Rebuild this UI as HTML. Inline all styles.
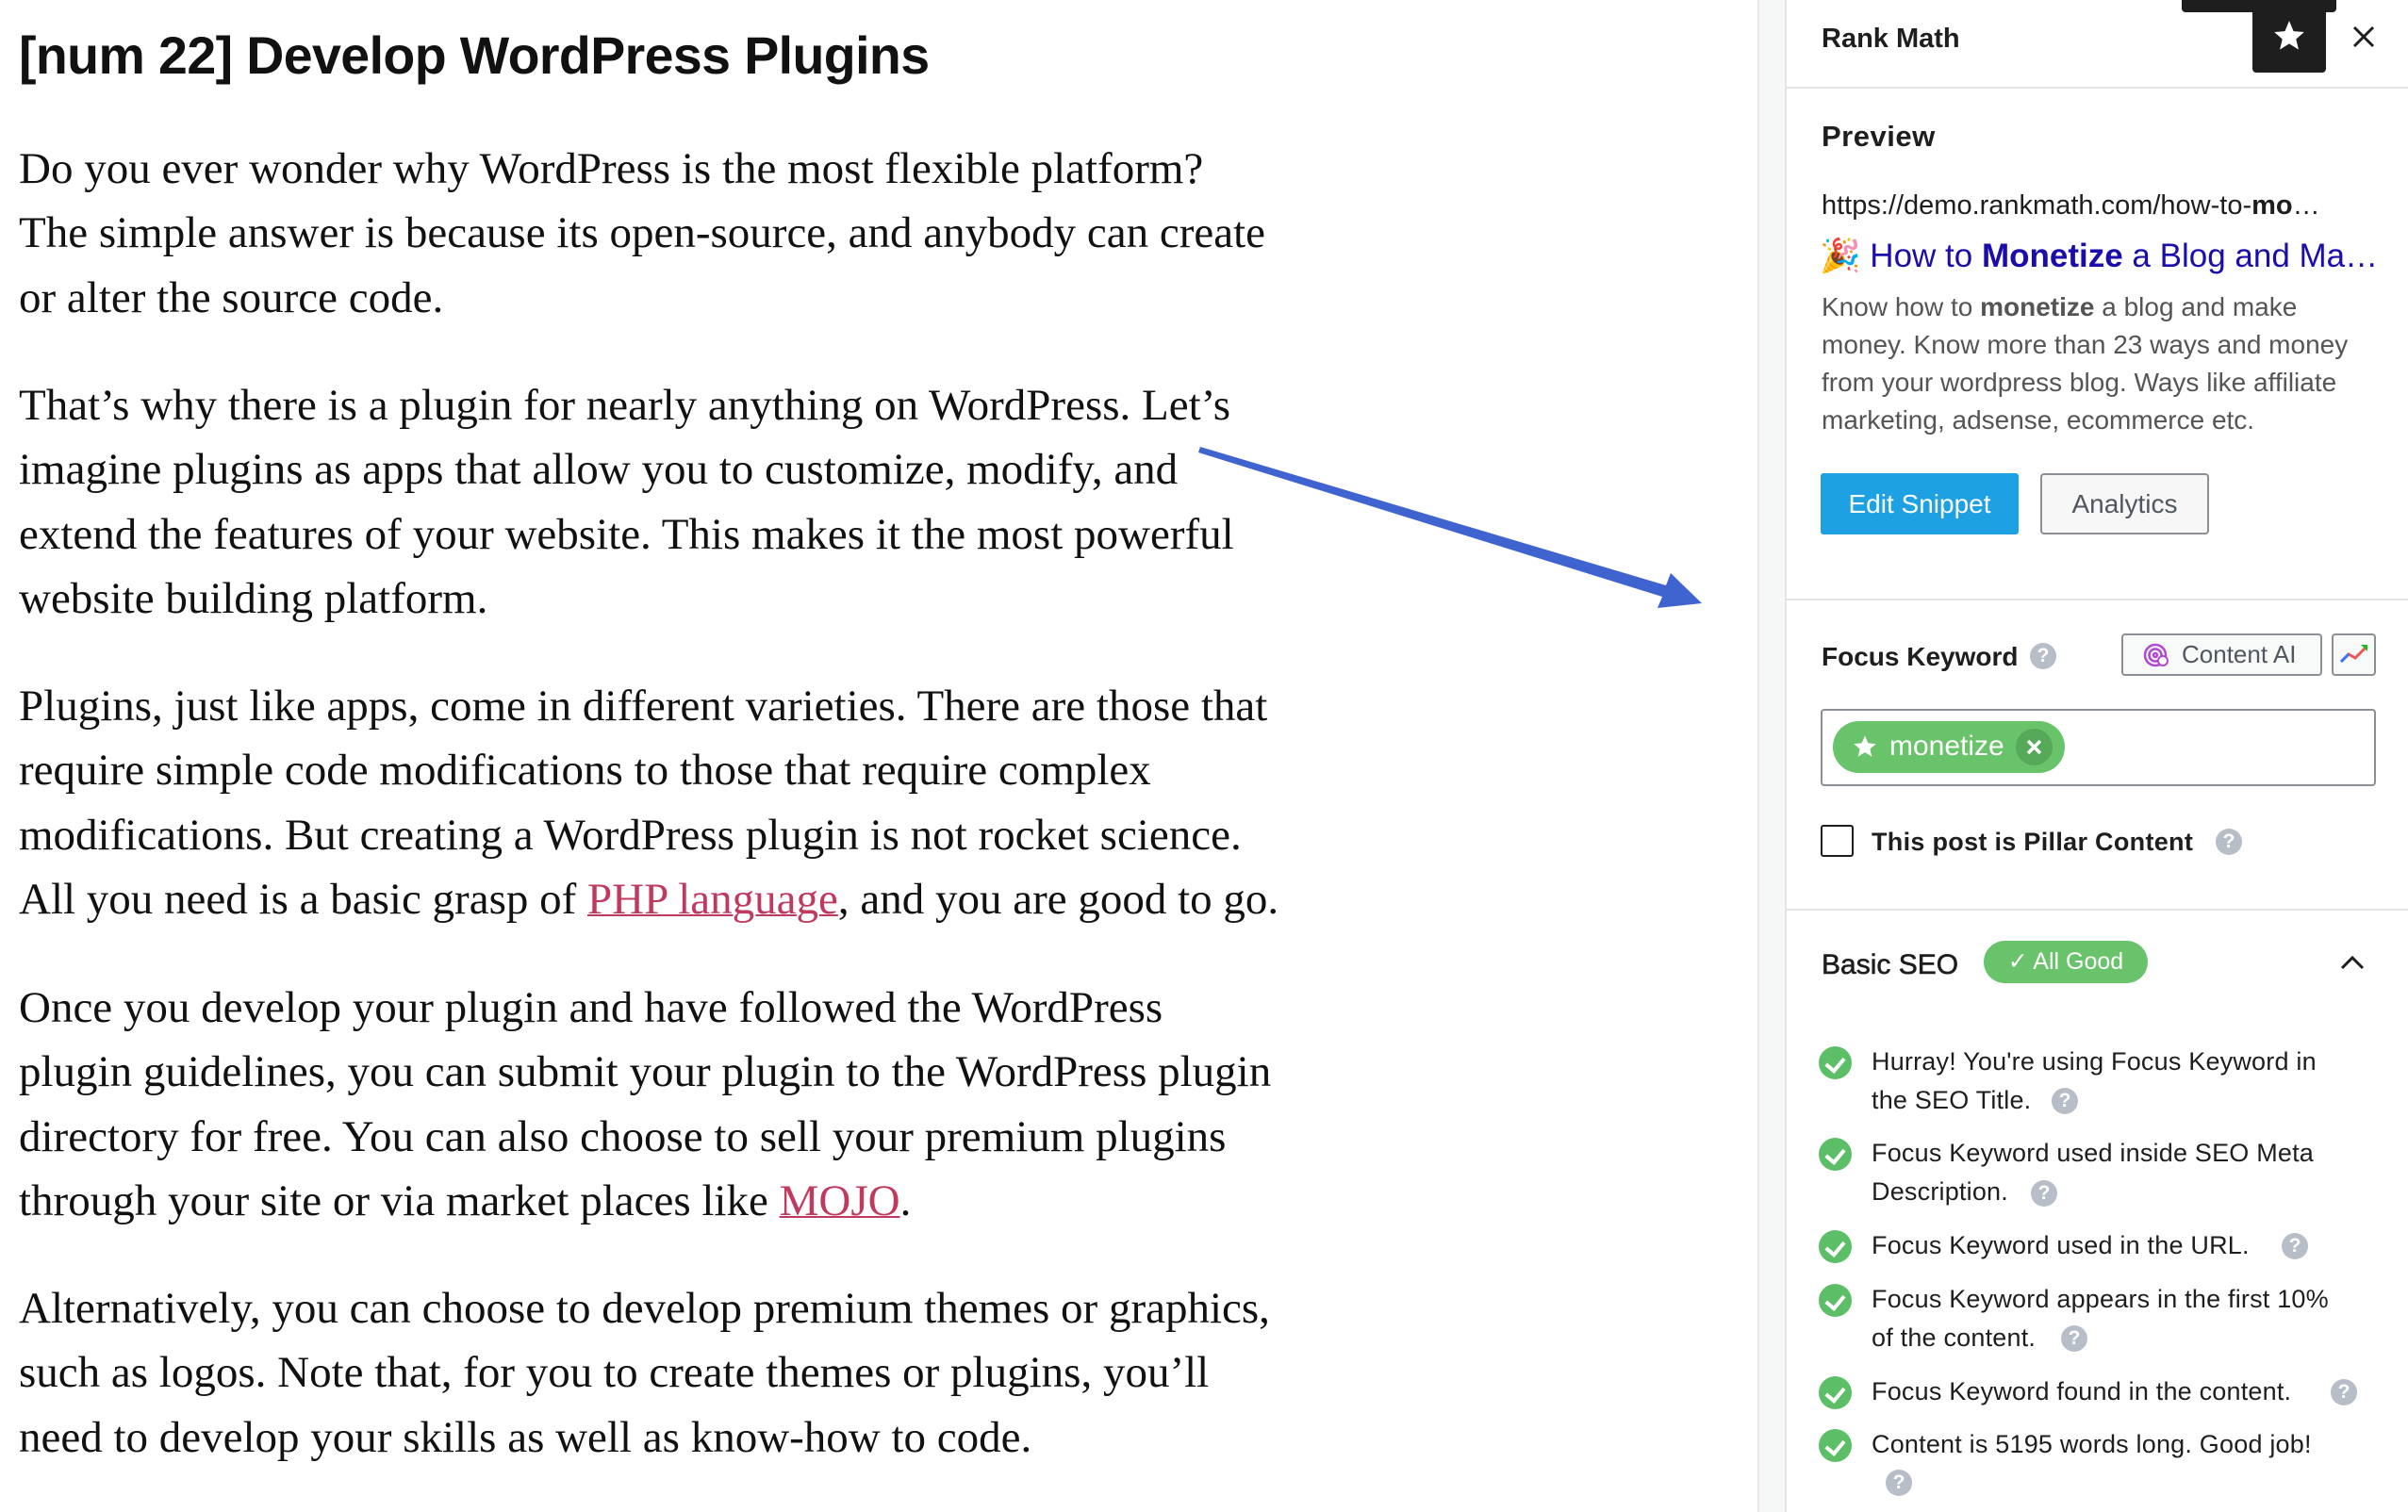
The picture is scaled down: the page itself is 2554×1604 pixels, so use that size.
<!DOCTYPE html>
<html><head><meta charset="utf-8"><style>
*{margin:0;padding:0;box-sizing:border-box}
body{width:2554px;height:1604px;background:#fff;position:relative;overflow:hidden;font-family:"Liberation Sans",sans-serif;color:#1e1e1e}
.ab{position:absolute;white-space:nowrap}
h1{position:absolute;left:20px;top:27px;font:bold 55.5px/64px "Liberation Sans",sans-serif;color:#111;letter-spacing:-0.6px}
.p{position:absolute;left:20px;font:47px/68.4px "Liberation Serif",serif;color:#111;letter-spacing:0;white-space:nowrap}
.p a{color:#c03a60;text-decoration:underline;text-decoration-thickness:2px}
.strip{position:absolute;left:1864px;top:0;width:31px;height:1604px;background:#f6f7f7;border-left:2px solid #e8e8e8;border-right:2px solid #e2e4e7}
.hr{position:absolute;left:1895px;width:659px;height:2px;background:#e2e4e7}
.q{position:absolute;width:28px;height:28px;border-radius:50%;background:#b7bec8;color:#fff;font:bold 21px/28px "Liberation Sans",sans-serif;text-align:center}
.chk{position:absolute;left:1929px;width:35px;height:35px;border-radius:50%;background:#5cbf67}
.chk::after{content:"";position:absolute;left:11px;top:8px;width:9px;height:15px;border:solid #fff;border-width:0 4px 4px 0;transform:rotate(40deg)}
.li{position:absolute;left:1985px;font:27px/41px "Liberation Sans",sans-serif;color:#1e1e1e;letter-spacing:0.2px}
</style></head><body>
<h1>[num 22] Develop WordPress Plugins</h1>
<div class="p" style="top:145px">Do you ever wonder why WordPress is the most flexible platform?<br>The simple answer is because its open-source, and anybody can create<br>or alter the source code.</div>
<div class="p" style="top:396px">That’s why there is a plugin for nearly anything on WordPress. Let’s<br>imagine plugins as apps that allow you to customize, modify, and<br>extend the features of your website. This makes it the most powerful<br>website building platform.</div>
<div class="p" style="top:715px">Plugins, just like apps, come in different varieties. There are those that<br>require simple code modifications to those that require complex<br>modifications. But creating a WordPress plugin is not rocket science.<br>All you need is a basic grasp of <a>PHP language</a>, and you are good to go.</div>
<div class="p" style="top:1035px">Once you develop your plugin and have followed the WordPress<br>plugin guidelines, you can submit your plugin to the WordPress plugin<br>directory for free. You can also choose to sell your premium plugins<br>through your site or via market places like <a>MOJO</a>.</div>
<div class="p" style="top:1354px">Alternatively, you can choose to develop premium themes or graphics,<br>such as logos. Note that, for you to create themes or plugins, you’ll<br>need to develop your skills as well as know-how to code.</div>

<svg class="ab" style="left:0;top:0" width="2554" height="1604"><polygon points="1273,474 1767,621 1772,608 1805,640 1758,645 1763,633 1271,480" fill="#3f63cf"/></svg>

<div class="strip"></div>
<div class="ab" style="left:1932px;top:21px;font:bold 29px/40px 'Liberation Sans';color:#1e1e1e">Rank Math</div>
<div class="ab" style="left:2314px;top:0;width:164px;height:13px;background:#1e1e1e;border-radius:0 0 4px 4px"></div>
<div class="ab" style="left:2389px;top:0;width:78px;height:77px;background:#1e1e1e;border-radius:0 0 4px 4px"></div>
<svg class="ab" style="left:2409px;top:19px" width="38" height="38" viewBox="0 0 24 24"><path d="M12 2l2.9 6.9 7.1.6-5.4 4.7 1.7 7-6.3-3.9-6.3 3.9 1.7-7L2 9.5l7.1-.6z" fill="#fff"/></svg>
<svg class="ab" style="left:2494px;top:26px" width="26" height="26" viewBox="0 0 26 26"><path d="M3 3L23 23M23 3L3 23" stroke="#1e1e1e" stroke-width="3"/></svg>
<div class="hr" style="top:92px"></div>

<div class="ab" style="left:1932px;top:125px;font:bold 31px/40px 'Liberation Sans';letter-spacing:0.5px">Preview</div>
<div class="ab" style="left:1932px;top:199px;font:29px/38px 'Liberation Sans';color:#1e1e1e">https://demo.rankmath.com/how-to-<b>mo</b>…</div>
<div class="ab" style="left:1930px;top:250px;font:35px/44px 'Liberation Sans';color:#1a0dab">🎉 How to <b>Monetize</b> a Blog and Ma…</div>
<div class="ab" style="left:1932px;top:306px;font:28px/40px 'Liberation Sans';color:#555">Know how to <b>monetize</b> a blog and make<br>money. Know more than 23 ways and money<br>from your wordpress blog. Ways like affiliate<br>marketing, adsense, ecommerce etc.</div>
<div class="ab" style="left:1931px;top:502px;width:210px;height:65px;background:#1da1e2;border-radius:3px;color:#fff;font:28px/65px 'Liberation Sans';text-align:center">Edit Snippet</div>
<div class="ab" style="left:2164px;top:502px;width:179px;height:65px;background:#f7f7f8;border:2px solid #8c8f94;border-radius:4px;color:#50575e;font:28px/61px 'Liberation Sans';text-align:center">Analytics</div>
<div class="hr" style="top:635px"></div>

<div class="ab" style="left:1932px;top:679px;font:bold 28px/36px 'Liberation Sans'">Focus Keyword</div>
<div class="q" style="left:2153px;top:682px">?</div>
<div class="ab" style="left:2250px;top:672px;width:213px;height:45px;border:2px solid #8c8f94;border-radius:4px;background:#f8f9f9;color:#50575e;font:26px/41px 'Liberation Sans';padding-left:62px">Content AI</div>
<svg class="ab" style="left:2272px;top:681px" width="30" height="28" viewBox="0 0 30 28"><g fill="none" stroke="#b04ad0" stroke-width="2.5"><circle cx="14" cy="14" r="11"/><circle cx="14" cy="14" r="6.5"/><circle cx="14" cy="14" r="2"/></g><circle cx="22" cy="20" r="5" fill="#fff" stroke="#b04ad0" stroke-width="2"/></svg>
<div class="ab" style="left:2473px;top:672px;width:47px;height:45px;border:2px solid #8c8f94;border-radius:4px;background:#f8f9f9"></div>
<svg class="ab" style="left:2480px;top:680px" width="34" height="28" viewBox="0 0 34 28"><polyline points="3,22 11,14 18,18 29,7" fill="none" stroke="#e55" stroke-width="3"/><polyline points="3,22 11,14" stroke="#37f" stroke-width="3"/><polygon points="24,4 31,4 31,11" fill="#2b2"/></svg>

<div class="ab" style="left:1931px;top:752px;width:589px;height:82px;border:2px solid #8c8f94;border-radius:4px"></div>
<div class="ab" style="left:1944px;top:765px;width:246px;height:55px;background:#68c36a;border-radius:28px"></div>
<svg class="ab" style="left:1964px;top:778px" width="28" height="28" viewBox="0 0 24 24"><path d="M12 2l2.9 6.9 7.1.6-5.4 4.7 1.7 7-6.3-3.9-6.3 3.9 1.7-7L2 9.5l7.1-.6z" fill="#fff"/></svg>
<div class="ab" style="left:2004px;top:772px;font:30px/40px 'Liberation Sans';color:#fff">monetize</div>
<div class="ab" style="left:2138px;top:773px;width:39px;height:39px;border-radius:50%;background:#57a95a"></div>
<svg class="ab" style="left:2148px;top:783px" width="19" height="19"><path d="M3 3L16 16M16 3L3 16" stroke="#fff" stroke-width="3.5"/></svg>

<div class="ab" style="left:1931px;top:875px;width:35px;height:34px;border:2px solid #1e1e1e;border-radius:3px"></div>
<div class="ab" style="left:1985px;top:875px;font:bold 27px/36px 'Liberation Sans';letter-spacing:0.3px">This post is Pillar Content</div>
<div class="q" style="left:2350px;top:879px">?</div>
<div class="hr" style="top:964px"></div>

<div class="ab" style="left:1932px;top:1004px;font:30px/40px 'Liberation Sans';color:#1e1e1e;-webkit-text-stroke:0.6px #1e1e1e">Basic SEO</div>
<div class="ab" style="left:2104px;top:998px;width:174px;height:45px;background:#68c36a;border-radius:23px;color:#fff;font:25px/45px 'Liberation Sans';text-align:center">✓ All Good</div>
<svg class="ab" style="left:2481px;top:1012px" width="28" height="18"><path d="M3 15L14 4L25 15" fill="none" stroke="#1e1e1e" stroke-width="3"/></svg>

<div class="chk" style="top:1110px"></div>
<div class="li" style="top:1106px">Hurray! You're using Focus Keyword in<br>the SEO Title.</div>
<div class="q" style="left:2176px;top:1154px">?</div>
<div class="chk" style="top:1207px"></div>
<div class="li" style="top:1203px">Focus Keyword used inside SEO Meta<br>Description.</div>
<div class="q" style="left:2154px;top:1252px">?</div>
<div class="chk" style="top:1305px"></div>
<div class="li" style="top:1301px">Focus Keyword used in the URL.</div>
<div class="q" style="left:2420px;top:1308px">?</div>
<div class="chk" style="top:1362px"></div>
<div class="li" style="top:1358px">Focus Keyword appears in the first 10%<br>of the content.</div>
<div class="q" style="left:2186px;top:1406px">?</div>
<div class="chk" style="top:1460px"></div>
<div class="li" style="top:1456px">Focus Keyword found in the content.</div>
<div class="q" style="left:2472px;top:1463px">?</div>
<div class="chk" style="top:1516px"></div>
<div class="li" style="top:1512px">Content is 5195 words long. Good job!</div>
<div class="q" style="left:2000px;top:1559px">?</div>
</body></html>
